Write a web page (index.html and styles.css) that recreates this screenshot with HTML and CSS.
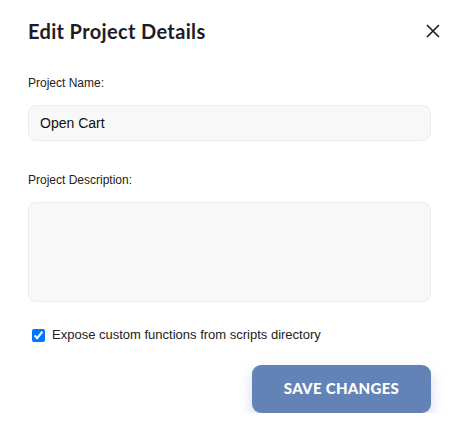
FILE: index.html
```html
<!DOCTYPE html>
<html lang="en">
<head>
<meta charset="utf-8">
<title>Edit Project Details</title>
<link rel="stylesheet" href="styles.css">
</head>
<body>
<div class="dialog">
  <div class="dialog-header">
    <h2 class="dialog-title">Edit Project Details</h2>
    <button class="close-btn" aria-label="Close">
      <svg width="14" height="14" viewBox="0 0 14 14"><path d="M1 1 L13 13 M13 1 L1 13" stroke="#1a1a1a" stroke-width="1.6" fill="none"/></svg>
    </button>
  </div>
  <div class="field">
    <label class="field-label" for="pname">Project Name:</label>
    <input class="text-input" id="pname" type="text" value="Open Cart">
  </div>
  <div class="field">
    <label class="field-label" for="pdesc">Project Description:</label>
    <textarea class="text-area" id="pdesc"></textarea>
  </div>
  <label class="check-row">
    <input type="checkbox" class="check" checked>
    <span>Expose custom functions from scripts directory</span>
  </label>
  <div class="actions">
    <button class="save-btn">SAVE CHANGES</button>
  </div>
</div>
</body>
</html>
```
FILE: styles.css
```css
html, body {
  margin: 0;
  padding: 0;
  background: #ffffff;
}
body {
  font-family: "Liberation Sans", Arial, sans-serif;
  color: #1f1f1f;
}
.dialog {
  padding: 18px 28px 0 28px;
  display: flex;
  flex-direction: column;
}
.dialog-header {
  display: flex;
  align-items: center;
  justify-content: space-between;
  height: 26px;
}
.dialog-title {
  margin: 0;
  font-family: Lato, "Open Sans", sans-serif;
  font-weight: 700;
  font-size: 20px;
  letter-spacing: 0.35px;
  line-height: 26px;
  color: #1c1c28;
}
.close-btn {
  border: 0;
  background: transparent;
  padding: 0;
  margin-right: -12px;
  width: 20px;
  height: 20px;
  display: flex;
  align-items: center;
  justify-content: center;
}
.field {
  display: flex;
  flex-direction: column;
  gap: 14px;
  margin-top: 31px;
}
.field-label {
  font-size: 12px;
  line-height: 16px;
  color: #222;
}
.text-input, .text-area {
  box-sizing: border-box;
  width: 100%;
  background: #f8f8f8;
  border: 1px solid #ececec;
  border-radius: 8px;
  font-family: "Liberation Sans", Arial, sans-serif;
  font-size: 14px;
  color: #111;
  outline: none;
}
.text-input {
  height: 36px;
  padding: 0 11px;
}
.text-area {
  height: 100px;
  resize: none;
  padding: 10px 11px;
}
.check-row {
  display: flex;
  align-items: center;
  gap: 7px;
  margin-top: 25px;
  font-size: 13px;
  line-height: 16px;
  color: #222;
}
.check {
  margin: 0 0 0 4px;
  width: 13px;
  height: 13px;
}
.actions {
  display: flex;
  justify-content: flex-end;
  margin-top: 22px;
}
.save-btn {
  width: 179px;
  height: 48px;
  border: 0;
  border-radius: 9px;
  background: #6383b7;
  color: #ffffff;
  font-family: Lato, sans-serif;
  font-weight: 900;
  font-size: 15px;
  letter-spacing: 0.3px;
  padding-bottom: 3px;
  box-shadow: 0 6px 14px rgba(99, 131, 183, 0.3);
}
```
